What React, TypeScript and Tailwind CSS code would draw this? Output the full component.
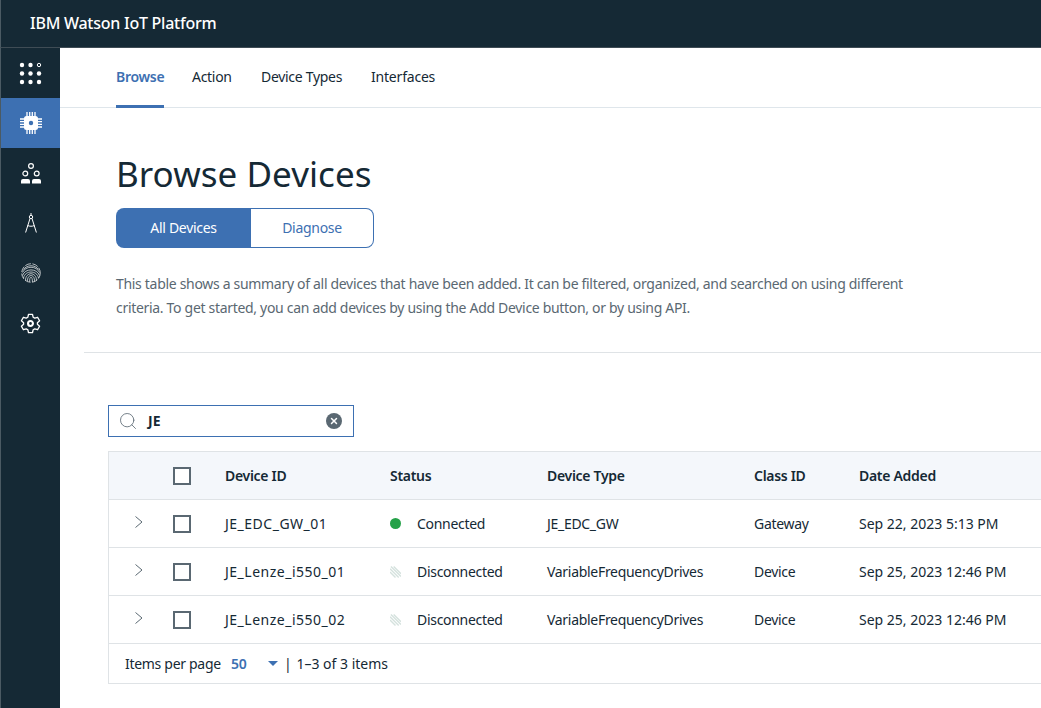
import { Search, X } from 'lucide-react';

const rows = [
  { id: 'JE_EDC_GW_01', connected: true, type: 'JE_EDC_GW', cls: 'Gateway', date: 'Sep 22, 2023 5:13 PM' },
  { id: 'JE_Lenze_i550_01', connected: false, type: 'VariableFrequencyDrives', cls: 'Device', date: 'Sep 25, 2023 12:46 PM' },
  { id: 'JE_Lenze_i550_02', connected: false, type: 'VariableFrequencyDrives', cls: 'Device', date: 'Sep 25, 2023 12:46 PM' },
];

const gridCols = 'grid grid-cols-[64px_52px_165px_157px_207px_105px_1fr] items-center';

function AppsIcon() {
  return (
    <svg width="23" height="23" viewBox="0 0 23 23" fill="white">
      {[3, 11.5, 20].map((y) =>
        [3, 11.5, 20].map((x) =>
          x === 20 && y === 3 ? (
            <circle key={`${x}-${y}`} cx={x} cy={y} r="1.7" fill="none" stroke="white" strokeWidth="1" />
          ) : (
            <circle key={`${x}-${y}`} cx={x} cy={y} r="2.2" />
          ),
        ),
      )}
    </svg>
  );
}

function ChipIcon() {
  return (
    <svg width="22" height="22" viewBox="0 0 22 22" fill="none" stroke="white">
      <rect x="4" y="4" width="14" height="14" rx="2.5" fill="white" stroke="none" />
      <circle cx="11" cy="11" r="2.2" fill="#3d70b2" stroke="none" />
      <path d="M7 0v4M9.700 0v4M12.300 0v4M15 0v4M7 18v4M9.700 18v4M12.300 18v4M15 18v4M0 7h4M0 9.700h4M0 12.300h4M0 15h4M18 7h4M18 9.700h4M18 12.300h4M18 15h4" strokeWidth="1.300" />
    </svg>
  );
}

function PeopleIcon() {
  return (
    <svg width="20" height="21" viewBox="0 0 20 21" fill="none" stroke="white" strokeWidth="1.200">
      <circle cx="10" cy="3" r="2.400" />
      <circle cx="4.300" cy="10.500" r="2.400" />
      <circle cx="15.700" cy="10.500" r="2.400" />
      <path d="M0 20.500v-2.500q0-2 2-2h5q2 0 2 2v2.500zM11 20.500v-2.500q0-2 2-2h5q2 0 2 2v2.500z" fill="white" stroke="none" />
    </svg>
  );
}

function CompassIcon() {
  return (
    <svg width="12" height="20" viewBox="0 0 12 20" fill="none" stroke="white" strokeWidth="1">
      <circle cx="6" cy="4" r="1.700" />
      <path d="M6 0v2.300M5 5.500 .6 19.500M7 5.500l4.400 14M2.600 12.500c2 1 4.800 1 6.800 0" />
    </svg>
  );
}

function FingerprintIcon() {
  return (
    <svg width="20" height="20" viewBox="0 0 20 20" fill="none" stroke="white" strokeWidth="0.800" opacity="0.85">
      <circle cx="10" cy="10" r="9.300" strokeDasharray="6 1.500" />
      <path d="M2.500 6.500c3.500-5 11.500-5 15 0M1.500 9.500c3-7 14-7 17 0M1.500 12.500c2.500-7.500 14.500-7.500 17 0M2.500 15c1.500-8 13.500-8 15 0M4.500 17.500c0-9 11-9 11 0M6.500 18.500c-.5-8 7.500-8 7 0M8.700 19c-.5-6.500 3-6.500 2.700 0" />
    </svg>
  );
}

function GearIcon() {
  return (
    <svg width="21" height="21" viewBox="0 0 24 24" fill="none" stroke="white" strokeWidth="1.500" strokeLinejoin="round">
      <path d="M9.700 1.500h4.600l.7 3.300 1.900 1.100 3.200-1 2.300 4-2.500 2.200v1.800l2.500 2.200-2.300 4-3.200-1-1.900 1.100-.7 3.300H9.700L9 19.200l-1.900-1.100-3.200 1-2.300-4 2.500-2.200v-1.800L1.600 8.900l2.300-4 3.200 1L9 4.800z" />
      <circle cx="12" cy="12" r="2.800" strokeWidth="2.400" />
    </svg>
  );
}

function DisconnectedIcon() {
  return (
    <svg width="12" height="12" viewBox="0 0 12 12" fill="none" stroke="#d5e2de" strokeWidth="1.500" className="max-w-none">
      <path d="M1 0 12 11M0 2.500 9.500 12M4 0l8 8M0 6l6 6" />
    </svg>
  );
}

function Chevron() {
  return (
    <svg width="8" height="12" viewBox="0 0 8 12" fill="none" stroke="#5a6872" strokeWidth="1">
      <path d="M.5 .5 7 6 .5 11.500" />
    </svg>
  );
}

function Checkbox() {
  return <div className="h-[18px] w-[18px] border-2 border-[#5a6872] bg-white" />;
}

export default function App() {
  return (
    <div className="flex h-screen flex-col overflow-hidden bg-white font-['Noto_Sans',sans-serif] text-[#152935]">
      {/* HEADER */}
      <header className="flex h-[48px] shrink-0 items-center border-b border-b-[#3f4c55] border-l border-l-[#4b5a63] bg-[#152935] pb-[1px] pl-[29px]">
        <span className="text-[16px] font-medium tracking-[-0.25px] text-white">IBM Watson IoT Platform</span>
      </header>

      <div className="flex min-h-0 flex-1">
        {/* SIDEBAR */}
        <nav className="flex w-[60px] shrink-0 flex-col border-l border-l-[#4b5a63] bg-[#152935]">
          <div className="flex h-[50px] items-center justify-center"><AppsIcon /></div>
          <div className="flex h-[50px] items-center justify-center bg-[#3d70b2]"><ChipIcon /></div>
          <div className="flex h-[50px] items-center justify-center"><PeopleIcon /></div>
          <div className="flex h-[50px] items-center justify-center"><CompassIcon /></div>
          <div className="flex h-[50px] items-center justify-center"><FingerprintIcon /></div>
          <div className="flex h-[50px] items-center justify-center"><GearIcon /></div>
        </nav>

        <main className="min-w-0 flex-1 overflow-hidden tracking-[-0.3px]">
          {/* TABS */}
          <div className="flex h-[60px] items-stretch gap-[28px] border-b border-[#dfe6eb] pl-[56px] text-[14px] leading-[58px]">
            <a className="relative w-[48px] whitespace-nowrap font-semibold text-[#3d70b2]">
              Browse
              <span className="absolute right-0 bottom-[-1px] left-0 h-[3px] bg-[#3d70b2]" />
            </a>
            <a className="w-[41px] whitespace-nowrap">Action</a>
            <a className="w-[82px] whitespace-nowrap">Device Types</a>
            <a className="whitespace-nowrap tracking-[-0.2px]">Interfaces</a>
          </div>

          {/* PAGE HEADING */}
          <div className="ml-[24px] border-b border-[#dfe3e6] pb-[32px] pl-[32px]">
            <h1 className="mt-[42px] text-[35px] leading-[48px] font-normal tracking-[0.05px]">Browse Devices</h1>
            <div className="mt-[10px] flex h-[40px] w-[258px] text-[14px]">
              <button className="w-[135px] rounded-l-[8px] bg-[#3d70b2] pb-[1px] text-white">All Devices</button>
              <button className="flex-1 rounded-r-[8px] border border-l-0 border-[#3d70b2] pb-[1px] text-[#3d70b2]">Diagnose</button>
            </div>
            <p className="mt-[24px] w-[800px] text-[14px] leading-[24px] tracking-[-0.31px] text-[#5a6872]">
              This table shows a summary of all devices that have been added. It can be filtered, organized, and searched on using different criteria. To get started, you can add devices by using the Add Device button, or by using API.
            </p>
          </div>

          <div className="pt-[52px] pl-[48px]">
            {/* SEARCH */}
            <div className="flex h-[32px] w-[246px] items-center border border-[#3d70b2] pr-[11px] pl-[9px]">
              <Search size={20} strokeWidth={1} className="text-[#5a6872]" />
              <span className="ml-[10px] flex-1 pb-[1px] text-[14px] font-bold tracking-normal">JE</span>
              <span className="flex h-[16px] w-[16px] items-center justify-center rounded-full bg-[#5a6872]">
                <X size={10} strokeWidth={3.500} className="text-white" />
              </span>
            </div>

            {/* TABLE */}
            <div className="mt-[14px] border border-r-0 border-[#dfe3e6] text-[14px]">
              <div className={`${gridCols} h-[48px] border-b border-[#dfe3e6] bg-[#f4f7fb] font-semibold`}>
                <span />
                <Checkbox />
                <span>Device ID</span>
                <span>Status</span>
                <span>Device Type</span>
                <span>Class ID</span>
                <span>Date Added</span>
              </div>
              {rows.map((row) => (
                <div key={row.id} className={`${gridCols} h-[48px] border-b border-[#dfe3e6] whitespace-nowrap`}>
                  <span className="flex pb-[3px] pl-[26px]">
                    <Chevron />
                  </span>
                  <Checkbox />
                  <span className="tracking-[0.5px]">{row.id}</span>
                  <span className="flex items-center">
                    <span className="flex w-[11px] justify-start">
                      {row.connected ? (
                        <span className="h-[11px] w-[11px] shrink-0 rounded-full bg-[#24a148]" />
                      ) : (
                        <DisconnectedIcon />
                      )}
                    </span>
                    <span className="ml-[16px]">{row.connected ? 'Connected' : 'Disconnected'}</span>
                  </span>
                  <span>{row.type}</span>
                  <span>{row.cls}</span>
                  <span className="tracking-normal">{row.date}</span>
                </div>
              ))}
              <div className="flex h-[39px] items-center pl-[16px] whitespace-nowrap">
                <span className="w-[106px]">Items per page</span>
                <span className="w-[37px] font-semibold text-[#3d70b2]">50</span>
                <svg width="10" height="5" viewBox="0 0 10 5" className="fill-[#3d70b2]"><path d="M0 0h10L5 5z" /></svg>
                <span className="ml-[6px]">|</span>
                <span className="ml-[5px] tracking-normal">1–3 of 3 items</span>
              </div>
            </div>
          </div>
        </main>
      </div>
    </div>
  );
}
